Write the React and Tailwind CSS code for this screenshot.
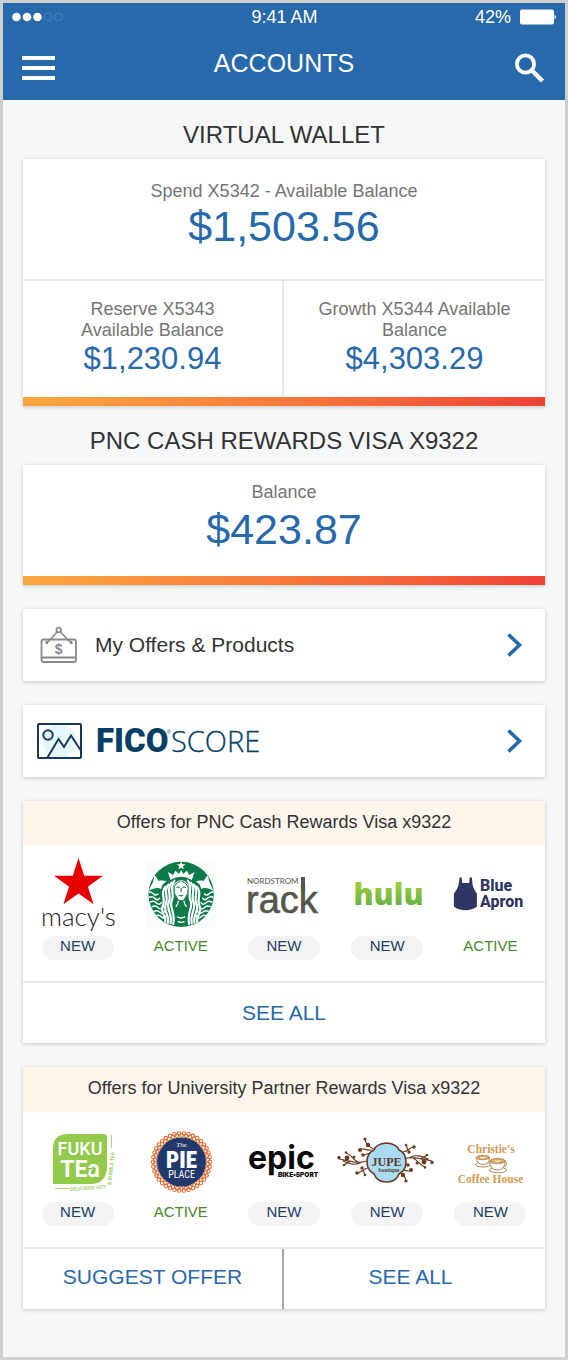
import React from "react";

const NAVY = "#17385f";

function Macys() {
  return (
    <svg viewBox="27 846 100 90" className="h-[90px] w-[100px]" role="img" aria-label="macy's">
      <polygon
        fill="#e60000"
        points="77.5,858 83.2,875.8 102,875.8 86.9,886.7 92.6,904.3 77.5,893.4 62.4,904.3 68.1,886.7 53,875.8 71.8,875.8"
      />
      <text x="77.5" y="926" textAnchor="middle" fontSize="26" fontFamily="Lato, sans-serif" fontWeight="300" fill="#1c1c1c">
        macy's
      </text>
    </svg>
  );
}

function Siren() {
  const waves = [0, 10, 20, 30];
  const fins = [0, 1, 2, 3, 4, 5];
  const half = (
    <g fill="none" stroke="#fff" strokeWidth="6.500" strokeLinecap="round">
      {waves.map((d) => (
        <path
          key={d}
          transform={`translate(${-d * 0.9} ${d * 0.5})`}
          d={`M90 ${68 + d * 0.1} C72 90 92 106 82 128 C72 148 94 160 ${86 + d * 0.1} ${198 - d * 0.7}`}
        />
      ))}
      {fins.map((i) => (
        <path key={i} strokeWidth="4.500" d={`M${8 + i * 5} ${104 + i * 14} q10 -5 18 3 t14 ${1 - i}`} />
      ))}
      <path
        fill="#fff"
        stroke="none"
        d="M14 98 C17 82 28 78 29 52 C37 56 38 64 42 69 C52 66 58 69 66 70 C58 76 52 80 50 93 C42 87 26 90 14 98 Z"
      />
    </g>
  );
  return (
    <svg viewBox="130.500 846 100 90" className="h-[90px] w-[100px]" role="img" aria-label="Starbucks">
      <rect x="145" y="861" width="71" height="68" fill="#fafcf9" />
      <g transform="translate(144 858) scale(0.3333)">
        <clipPath id="sirenClip">
          <circle cx="110" cy="109" r="98" />
        </clipPath>
        <circle cx="110" cy="109" r="98" fill="#0d7a4a" />
        <g clipPath="url(#sirenClip)">
          {half}
          <g transform="translate(220 0) scale(-1 1)">{half}</g>
          <path fill="#fff" d="M88 80 Q110 54 132 80 Q136 104 124 118 Q117 127 110 127 Q103 127 96 118 Q84 104 88 80Z" />
          <path fill="none" stroke="#0d7a4a" strokeWidth="3" d="M108 70 Q90 76 89 92 Q88 108 98 120 M112 70 Q130 76 131 92 Q132 108 122 120" />
          <path fill="none" stroke="#0d7a4a" strokeWidth="3.500" d="M96 89 q5 -4 10 0 M114 89 q5 -4 10 0 M110 90 v11 M104 112 q6 3 12 0" />
          <path fill="none" stroke="#fff" strokeWidth="4" d="M102 128 Q100 140 94 146 M118 128 Q120 140 126 146 M98 176 q12 8 24 0 M100 190 q10 6 20 0" />
          <path
            fill="#fff"
            d="M78 66 L70 42 L86 51 L93 38 L103 48 L110 36 L117 48 L127 38 L134 51 L150 42 L142 66 Q110 46 78 66Z"
          />
          <polygon fill="#fff" points="110,10 113.500,19 123,19 115.500,25 118,34 110,29 102,34 104.500,25 97,19 106.500,19" />
        </g>
      </g>
    </svg>
  );
}

function NordstromRack() {
  return (
    <svg viewBox="234 846 100 90" className="h-[90px] w-[100px]" role="img" aria-label="Nordstrom Rack" fill="#56564c">
      <text x="247" y="884" fontSize="8" fontFamily="Lato, sans-serif" fontWeight="400">
        NORDSTROM
      </text>
      <text x="246" y="913" fontSize="38" fontFamily="'Liberation Sans', sans-serif" stroke="#56564c" strokeWidth="0.600">
        rack
      </text>
      <rect x="301" y="877" width="4" height="14" />
    </svg>
  );
}

function Hulu() {
  return (
    <svg viewBox="337 846 100 90" className="h-[90px] w-[100px]" role="img" aria-label="hulu">
      <linearGradient id="huluGreen" x1="0" y1="0" x2="0" y2="1">
        <stop offset="0.2" stopColor="#a5cd39" />
        <stop offset="0.8" stopColor="#66b245" />
      </linearGradient>
      <text
        x="388.500"
        y="905"
        textAnchor="middle"
        fontSize="30"
        fontFamily="'Open Sans', sans-serif"
        fontWeight="800"
        fill="url(#huluGreen)"
      >
        hulu
      </text>
    </svg>
  );
}

function BlueApron() {
  return (
    <svg viewBox="440 846 100 90" className="h-[90px] w-[100px]" role="img" aria-label="Blue Apron" fill="#2e3563">
      <path d="M459.500 877.500 h2.200 l0.500 5.500 h7 l0.500 -5.500 h2.200 c0.300 6 0.800 11 5 16 v13 c-6 5 -17 5 -23 0 v-13 c4.500 -5 5.200 -10 5.600 -16z" />
      <text x="480" y="891" fontSize="16" fontFamily="Roboto, sans-serif" fontWeight="800">
        Blue
      </text>
      <text x="480" y="907" fontSize="16" fontFamily="Roboto, sans-serif" fontWeight="800">
        Apron
      </text>
    </svg>
  );
}

function FukuTea() {
  return (
    <svg viewBox="27 1111 100 90" className="h-[90px] w-[100px]" role="img" aria-label="Fuku Tea">
      <path d="M52 1183 V1148 Q52 1133 67 1133 H102 Q106 1133 106 1136 V1168 Q104 1183 90 1183 Z" fill="#92cb4c" />
      <g fill="#fff" fontFamily="Roboto, sans-serif" textAnchor="middle">
        <text x="79" y="1154" fontSize="18" fontWeight="500">
          FUKU
        </text>
        <text x="79" y="1176" fontSize="23" fontWeight="700">
          TEa
        </text>
      </g>
      <path d="M90 1173 q-1 -5 5 -6 q0 6 -5 6z" fill="#92cb4c" />
      <g fontSize="5" fontFamily="Roboto, sans-serif" fontWeight="500" fill="#92cb4c">
        <text transform="translate(69 1190) rotate(-4)">DELICIOUS HOT</text>
        <text transform="translate(110 1184) rotate(-84)">&amp; BUBBLE TEA</text>
      </g>
      <path d="M54 1187.500 h14 M110.500 1134 v13" stroke="#92cb4c" strokeWidth="0.800" />
    </svg>
  );
}

function PiePlace() {
  const links = Array.from({ length: 38 }, (_, i) => (i * 2 * Math.PI) / 38);
  return (
    <svg viewBox="130.500 1111 100 90" className="h-[90px] w-[100px]" role="img" aria-label="The Pie Place">
      <g fill="none" stroke="#e2703a" strokeWidth="1.100">
        {links.map((a) => (
          <g key={a}>
            <circle cx={181 + 28.5 * Math.cos(a)} cy={1161 + 28.5 * Math.sin(a)} r="1.800" />
            <circle cx={181 + 26.5 * Math.cos(a + 0.08)} cy={1161 + 26.5 * Math.sin(a + 0.08)} r="1.800" />
          </g>
        ))}
      </g>
      <circle cx="181" cy="1161" r="24.500" fill="#213a6b" />
      <g fill="#fff" textAnchor="middle">
        <text x="181" y="1146" fontSize="7" fontStyle="italic" fontFamily="'Liberation Serif', serif">
          The
        </text>
        <text x="181" y="1167" fontSize="23" fontWeight="900" fontFamily="'Roboto Condensed', Roboto, sans-serif">
          PIE
        </text>
        <text x="181" y="1177" fontSize="10" fontFamily="'Roboto Condensed', Roboto, sans-serif">
          PLACE
        </text>
      </g>
    </svg>
  );
}

function Epic() {
  return (
    <svg viewBox="234 1111 100 90" className="h-[90px] w-[100px]" role="img" aria-label="Epic Bike + Sport" fill="#0a0a0a">
      <text x="248" y="1168" fontSize="32" fontWeight="700" fontFamily="Inter, sans-serif">
        epic
      </text>
      <text x="278" y="1176" fontSize="6.500" fontWeight="900" fontFamily="Inter, sans-serif">
        BIKE•SPORT
      </text>
    </svg>
  );
}

function Jupe() {
  const branch = (
    <g fill="none" stroke="#6b3a20" strokeWidth="1.200" strokeLinecap="round">
      <path d="M367 1160 C358 1163 350 1160 339 1158 M362 1161 C356 1165 350 1163 343 1160 M358 1161 C352 1158 352 1154 346 1152 M350 1160 l-6 4 M371 1149 C366 1150 362 1146 360 1149 M373 1148 C368 1144 366 1144 365 1138 M370 1152 l-6 2 M368 1167 C362 1168 362 1172 357 1172 M363 1169 l2 5" />
      <g fill="#6b3a20" stroke="none">
        <circle cx="339" cy="1156.500" r="1.700" />
        <circle cx="347" cy="1157" r="2.400" />
        <circle cx="354" cy="1156" r="1.500" />
        <circle cx="346" cy="1151.500" r="1.200" />
        <circle cx="344" cy="1164" r="1.200" />
        <circle cx="360" cy="1149" r="2" />
        <circle cx="363" cy="1154" r="1.700" />
        <circle cx="365" cy="1138" r="1.600" />
        <circle cx="368" cy="1144" r="2.200" />
        <circle cx="357" cy="1172" r="1.800" />
        <circle cx="362" cy="1167" r="1.700" />
        <circle cx="365" cy="1174" r="1.300" />
      </g>
    </g>
  );
  return (
    <svg viewBox="337 1111 100 90" className="h-[90px] w-[100px]" role="img" aria-label="Jupe Boutique">
      <g>{branch}</g>
      <g transform="rotate(180 385.500 1159)">{branch}</g>
      <path
        d="M374 1149 Q376 1143 386.500 1142 Q397 1143 399 1149 Q406 1152 406 1161 Q406 1169 399 1173 Q396 1181 386.500 1181 Q377 1181 374 1173 Q367 1169 367 1161 Q367 1152 374 1149Z"
        fill="#a9dcf4"
        stroke="#6b3a20"
        strokeWidth="1.600"
      />
      <g fill="#5d3826" textAnchor="middle" fontFamily="'Liberation Serif', serif" fontWeight="700">
        <text x="386.500" y="1165" fontSize="12">
          JUPE
        </text>
        <text x="389" y="1171" fontSize="5.500">
          boutique
        </text>
      </g>
    </svg>
  );
}

function Christies() {
  return (
    <svg viewBox="441 1111 100 90" className="h-[90px] w-[100px]" role="img" aria-label="Christie's Coffee House">
      <g fill="#d39a50" textAnchor="middle" fontFamily="'Liberation Serif', serif" fontSize="11.500" fontWeight="700">
        <text x="492" y="1152">
          Christie's
        </text>
        <text x="491.500" y="1182">
          Coffee House
        </text>
      </g>
      <g fill="#fff" stroke="#ab7d4c" strokeWidth="0.900">
        <ellipse cx="484" cy="1163.500" rx="7.500" ry="2.500" />
        <path d="M477.500 1156.500 q0 7 6.500 7 q6.500 0 6.500 -7z" />
        <ellipse cx="484" cy="1156.500" rx="6.500" ry="2.200" fill="#e0a862" />
        <ellipse cx="499" cy="1169" rx="8.500" ry="2.800" />
        <path d="M491 1160 q0 9 7.500 9 q7.500 0 7.500 -9z" />
        <path d="M506 1161 q3.500 0 0 5" fill="none" />
        <ellipse cx="498.500" cy="1160" rx="7.500" ry="2.600" fill="#e0a862" />
      </g>
      <path d="M480.500 1156 q2 -1 3.500 0.700 q1.500 -1.700 3.500 -0.700 l-3.500 2z M495 1159.500 q2 -1 3.500 0.700 q1.500 -1.700 3.500 -0.700 l-3.500 2z" fill="#fff" />
    </svg>
  );
}

function Chevron() {
  return (
    <svg viewBox="0 0 18 28" className="h-7 w-[18px] shrink-0" fill="none" stroke="#2869ad" strokeWidth="3.600" aria-hidden="true">
      <path d="M3.500 3.500 L14.500 14 L3.500 24.500" />
    </svg>
  );
}

function OfferSign() {
  return (
    <svg viewBox="0 0 38 38" className="h-[38px] w-[38px]" fill="none" stroke="#8a8a8a" strokeWidth="1.800" aria-hidden="true">
      <rect x="1.500" y="13.500" width="34.500" height="22.500" rx="2" />
      <path d="M1.500 31.500 H36" />
      <circle cx="18.700" cy="4" r="2.300" />
      <path d="M17 6 L7 17 M20.400 6 L31 17" strokeWidth="1.600" />
      <path d="M5.500 16.500 h2.500 M30 16.500 h2.500" strokeWidth="3" />
      <text x="18.700" y="28" textAnchor="middle" fontSize="14" fontWeight="700" fontFamily="'Liberation Sans', sans-serif" fill="#8a8a8a" stroke="none">
        $
      </text>
    </svg>
  );
}

function PictureIcon() {
  return (
    <svg viewBox="0 0 46 38" className="h-[38px] w-[46px]" fill="none" stroke={NAVY} strokeWidth="2" aria-hidden="true">
      <circle cx="23" cy="19" r="17" fill="#e6f6fd" stroke="none" />
      <rect x="2" y="2" width="43" height="34" rx="1" />
      <circle cx="12" cy="13" r="4.700" />
      <path d="M11.500 35.500 L22.500 17 L28 25 L35 13.500 L44.500 28" />
    </svg>
  );
}

function FicoLogo() {
  return (
    <svg viewBox="0 0 176 38" className="h-[38px] w-[176px]" fill="#053f66" role="img" aria-label="FICO Score">
      <text x="0" y="30" fontSize="33" fontWeight="900" fontFamily="Roboto, sans-serif">
        FICO
      </text>
      <text x="71" y="12" fontSize="5" fontFamily="'Liberation Sans', sans-serif">
        ®
      </text>
      <text x="75" y="30" fontSize="29" fontWeight="300" fontFamily="'Open Sans', sans-serif" stroke="#053f66" strokeWidth="0.300">
        SCORE
      </text>
    </svg>
  );
}

function Card({ className = "", children }) {
  return <section className={`bg-white shadow-[0_1px_4px_rgba(0,0,0,0.2)] ${className}`}>{children}</section>;
}

function Title({ children }) {
  return <h2 className="mt-[17px] mb-1.5 text-center text-[24px] leading-9 text-[#333]">{children}</h2>;
}

function GradientBar() {
  return <div className="h-[9px] bg-linear-to-r from-[#faa73f] to-[#ef4136]" />;
}

function OfferCard({ title, offers, children }) {
  return (
    <Card className="mt-6">
      <h3 className="bg-[#fef5ed] pb-[3px] text-center text-[18px] leading-[42px] text-[#333]">{title}</h3>
      <ul className="grid grid-cols-5 px-[3px] pb-[21px]">
        {offers.map(({ Logo, status }, i) => (
          <li key={i} className="flex flex-col items-center">
            <Logo />
            {status === "NEW" ? (
              <span className="h-6 w-[72px] rounded-full bg-[#f4f4f4] text-center text-[15px] leading-5 text-[#1c3f66]">NEW</span>
            ) : (
              <span className="h-6 text-center text-[15px] leading-5 text-[#47882b]">{status}</span>
            )}
          </li>
        ))}
      </ul>
      <div className="grid auto-cols-fr grid-flow-col border-t-2 border-[#e8e8e8]">{children}</div>
    </Card>
  );
}

const cashOffers = [
  { Logo: Macys, status: "NEW" },
  { Logo: Siren, status: "ACTIVE" },
  { Logo: NordstromRack, status: "NEW" },
  { Logo: Hulu, status: "NEW" },
  { Logo: BlueApron, status: "ACTIVE" },
];

const universityOffers = [
  { Logo: FukuTea, status: "NEW" },
  { Logo: PiePlace, status: "ACTIVE" },
  { Logo: Epic, status: "NEW" },
  { Logo: Jupe, status: "NEW" },
  { Logo: Christies, status: "NEW" },
];

export default function App() {
  return (
    <div className="min-h-screen border-[3px] border-[#cfcfcf] bg-[#f6f7f9] font-['Liberation_Sans',Arial,sans-serif]">
      <header className="bg-[#2869ab] text-white">
        <div className="grid h-7 grid-cols-3 items-center pr-2 pl-[9px] text-[18px] leading-6">
          <svg viewBox="0 0 52 10" className="h-[10px] w-[52px]" fill="#fff" aria-label="Signal strength">
            <circle cx="4.500" cy="5" r="4.300" />
            <circle cx="15" cy="5" r="4.300" />
            <circle cx="25.500" cy="5" r="4.300" />
            <circle cx="36" cy="5" r="3.900" fill="none" stroke="#5288c0" strokeWidth="0.800" />
            <circle cx="46.500" cy="5" r="3.900" fill="none" stroke="#5288c0" strokeWidth="0.800" />
          </svg>
          <span className="text-center">9:41 AM</span>
          <span className="flex items-center justify-end gap-2">
            42%
            <svg viewBox="0 0 38 16" className="h-4 w-[38px]" fill="#fff" aria-hidden="true">
              <rect x="1" y="0.500" width="34" height="15" rx="2" />
              <path d="M35.500 5.500 q3 2.500 0 5z" />
            </svg>
          </span>
        </div>
        <div className="grid h-[69px] grid-cols-[1fr_auto_1fr] items-center px-[19px]">
          <button type="button" aria-label="Menu" className="flex w-[33px] flex-col gap-[6px] pt-1">
            <span className="h-1 bg-white" />
            <span className="h-1 bg-white" />
            <span className="h-1 bg-white" />
          </button>
          <h1 className="pb-1.5 text-[25px] leading-8">ACCOUNTS</h1>
          <button type="button" aria-label="Search" className="justify-self-end pt-1">
            <svg viewBox="0 0 32 30" className="h-[30px] w-8" fill="none" stroke="#fff" strokeWidth="3.800" aria-hidden="true">
              <circle cx="11.500" cy="11" r="8.600" />
              <path d="M17.500 17 L28.500 28" strokeWidth="4.400" />
            </svg>
          </button>
        </div>
      </header>

      <main className="px-5 pb-6">
        <Title>VIRTUAL WALLET</Title>
        <Card>
          <div className="border-b-2 border-[#e8e8e8] pt-[21px] pb-[29px] text-center">
            <p className="text-[18px] leading-[22px] text-[#757575]">Spend X5342 - Available Balance</p>
            <p className="text-[43px] leading-[48px] text-[#2869ab]">$1,503.56</p>
          </div>
          <div className="grid grid-cols-2 text-center">
            <div className="border-r-2 border-[#e8e8e8] px-8 pt-[18px] pb-5">
              <p className="text-[18px] leading-[21px] text-[#757575]">
                Reserve X5343
                <br />
                Available Balance
              </p>
              <p className="text-[31px] leading-9 text-[#2869ab]">$1,230.94</p>
            </div>
            <div className="px-8 pt-[18px] pb-5">
              <p className="text-[18px] leading-[21px] text-[#757575]">
                Growth X5344 Available
                <br />
                Balance
              </p>
              <p className="text-[31px] leading-9 text-[#2869ab]">$4,303.29</p>
            </div>
          </div>
          <GradientBar />
        </Card>

        <Title>PNC CASH REWARDS VISA X9322</Title>
        <Card>
          <div className="pt-4 pb-[21px] text-center">
            <p className="text-[18px] leading-[22px] text-[#757575]">Balance</p>
            <p className="text-[43px] leading-[52px] text-[#2869ab]">$423.87</p>
          </div>
          <GradientBar />
        </Card>

        <Card className="mt-6 rounded-[3px]">
          <a href="#offers" className="flex h-[72px] items-center pr-[22px] pl-[17px]">
            <OfferSign />
            <span className="ml-[17px] flex-1 text-[21px] leading-6 text-[#333]">My Offers &amp; Products</span>
            <Chevron />
          </a>
        </Card>

        <Card className="mt-6">
          <a href="#fico" className="flex h-[72px] items-center justify-between pr-[22px] pl-[13px]">
            <span className="flex items-center gap-[14px]">
              <PictureIcon />
              <FicoLogo />
            </span>
            <Chevron />
          </a>
        </Card>

        <OfferCard title="Offers for PNC Cash Rewards Visa x9322" offers={cashOffers}>
          <button type="button" className="text-[21px] leading-[60px] text-[#2869ab]">
            SEE ALL
          </button>
        </OfferCard>

        <OfferCard title="Offers for University Partner Rewards Visa x9322" offers={universityOffers}>
          <button type="button" className="border-r-2 border-[#a8a8a8] pb-1 text-[21px] leading-[56px] text-[#2869ab]">
            SUGGEST OFFER
          </button>
          <button type="button" className="pr-2 pb-1 text-[21px] leading-[56px] text-[#2869ab]">
            SEE ALL
          </button>
        </OfferCard>
      </main>
    </div>
  );
}
